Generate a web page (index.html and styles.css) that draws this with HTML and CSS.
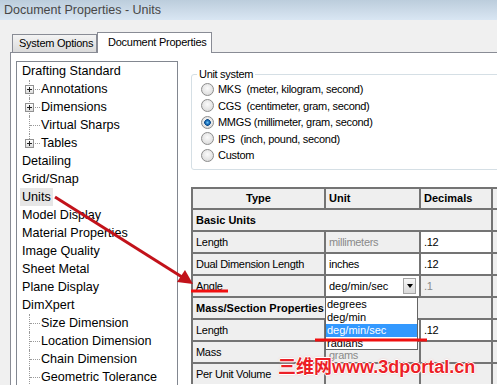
FILE: index.html
```html
<!DOCTYPE html>
<html lang="en">
  <head>
    <meta charset="UTF-8" />
    <title>Document Properties - Units</title>
    <link rel="stylesheet" href="styles.css">
  </head>
  <body>
    <div class="titlebar">Document Properties - Units</div>

    <div class="tabs">
      <div class="tab">System Options</div>
      <div class="tab active">Document Properties</div>
    </div>

    <div class="panel">
      <ul class="tree">
        <li>Drafting Standard</li>
        <li class="child"><span class="branch"><span class="plus"></span></span>Annotations</li>
        <li class="child"><span class="branch"><span class="plus"></span></span>Dimensions</li>
        <li class="child"><span class="branch"></span>Virtual Sharps</li>
        <li class="child last"><span class="branch"><span class="plus"></span></span>Tables</li>
        <li>Detailing</li>
        <li>Grid/Snap</li>
        <li><span class="selected">Units</span></li>
        <li>Model Display</li>
        <li>Material Properties</li>
        <li>Image Quality</li>
        <li>Sheet Metal</li>
        <li>Plane Display</li>
        <li>DimXpert</li>
        <li class="child"><span class="branch"></span>Size Dimension</li>
        <li class="child"><span class="branch"></span>Location Dimension</li>
        <li class="child"><span class="branch"></span>Chain Dimension</li>
        <li class="child"><span class="branch"></span>Geometric Tolerance</li>
      </ul>

      <div class="content">
        <fieldset class="unit-system">
          <legend>Unit system</legend>
          <div class="radio-row"><span class="radio"></span>MKS  (meter, kilogram, second)</div>
          <div class="radio-row"><span class="radio"></span>CGS  (centimeter, gram, second)</div>
          <div class="radio-row"><span class="radio checked"></span>MMGS (millimeter, gram, second)</div>
          <div class="radio-row"><span class="radio"></span>IPS  (inch, pound, second)</div>
          <div class="radio-row"><span class="radio"></span>Custom</div>
        </fieldset>

        <div class="units">
          <div class="cell head center">Type</div>
          <div class="cell head">Unit</div>
          <div class="cell head">Decimals</div>
          <div class="cell"></div>

          <div class="cell span">Basic Units</div>
          <div class="cell"></div>

          <div class="cell">Length</div>
          <div class="cell muted">millimeters</div>
          <div class="cell white">.12</div>
          <div class="cell"></div>

          <div class="cell">Dual Dimension Length</div>
          <div class="cell white">inches</div>
          <div class="cell white">.12</div>
          <div class="cell"></div>

          <div class="cell">Angle</div>
          <div class="cell white combo">deg/min/sec<span class="combo-btn"></span></div>
          <div class="cell muted">.1</div>
          <div class="cell"></div>

          <div class="cell span">Mass/Section Properties</div>
          <div class="cell"></div>

          <div class="cell">Length</div>
          <div class="cell white"></div>
          <div class="cell white">.12</div>
          <div class="cell"></div>

          <div class="cell">Mass</div>
          <div class="cell muted low">grams</div>
          <div class="cell"></div>
          <div class="cell"></div>

          <div class="cell">Per Unit Volume</div>
          <div class="cell"></div>
          <div class="cell"></div>
          <div class="cell"></div>

          <ul class="dropdown">
            <li>degrees</li>
            <li>deg/min</li>
            <li class="active">deg/min/sec</li>
            <li>radians</li>
          </ul>
        </div>
      </div>
    </div>

    <svg class="marks" width="497" height="385" viewBox="0 0 497 385">
      <line x1="55" y1="197" x2="182" y2="277" stroke="#c2121a" stroke-width="3" />
      <polygon points="193,284 177,282 185,270" fill="#c2121a" />
      <line x1="191" y1="291" x2="228" y2="291" stroke="#f01010" stroke-width="3" />
      <line x1="315" y1="340" x2="427" y2="340" stroke="#f01010" stroke-width="3" />
    </svg>

    <div class="watermark">三维网www.3dportal.cn</div>
  </body>
</html>
```

FILE: styles.css
```css
body {
  margin: 0;
  width: 497px;
  height: 385px;
  overflow: hidden;
  position: relative;
  background: #f0f0f0;
  font-family: "Liberation Sans", Arial, sans-serif;
  color: #000;
}
.titlebar {
  height: 20px;
  line-height: 21px;
  padding-left: 4px;
  font-size: 12.5px;
  color: #474747;
  background: linear-gradient(#bccddc, #d9e6f3);
}
.tabs {
  display: flex;
  align-items: flex-end;
  height: 32px;
  padding-left: 12px;
  box-sizing: border-box;
  font-size: 11px;
  letter-spacing: -0.25px;
}
.tab {
  box-sizing: border-box;
  width: 85px;
  height: 18px;
  line-height: 17px;
  padding-left: 6px;
  white-space: nowrap;
  overflow: hidden;
  border: 1px solid #898c95;
  border-bottom: none;
  background: linear-gradient(#f4f4f4, #dadada);
}
.tab.active {
  width: 115px;
  height: 21px;
  line-height: 18px;
  padding-left: 10px;
  margin-bottom: -1px;
  position: relative;
  z-index: 1;
  background: #fff;
}
.panel {
  margin-left: 10px;
  height: 332px;
  display: flex;
  align-items: flex-start;
  overflow: hidden;
  background: #fff;
  border-top: 1px solid #898c95;
  border-left: 1px solid #898c95;
}

/* tree */
.tree {
  list-style: none;
  margin: 8px 0 0 5px;
  padding: 0;
  width: 162px;
  height: 340px;
  flex: none;
  box-sizing: border-box;
  border: 1px solid #828790;
  font-size: 12.6px;
}
.tree li {
  display: flex;
  align-items: center;
  height: 18px;
  padding-left: 5px;
  white-space: nowrap;
}
.tree .selected {
  background: #e6e6e6;
  line-height: 18px;
  padding: 0 2px;
  margin-left: -2px;
}
.branch {
  position: relative;
  width: 19px;
  height: 18px;
  flex: none;
}
.branch::before {
  content: "";
  position: absolute;
  left: 7px;
  top: 0;
  bottom: 0;
  border-left: 1px dotted #9a9a9a;
}
.last .branch::before {
  bottom: 9px;
}
.branch::after {
  content: "";
  position: absolute;
  left: 8px;
  top: 9px;
  width: 10px;
  border-top: 1px dotted #9a9a9a;
}
.plus {
  position: absolute;
  left: 3px;
  top: 5px;
  width: 9px;
  height: 9px;
  box-sizing: border-box;
  z-index: 1;
  border: 1px solid #919191;
  background:
    linear-gradient(#222, #222) center / 5px 1px no-repeat,
    linear-gradient(#222, #222) center / 1px 5px no-repeat,
    linear-gradient(#fff, #dcdcdc);
}

/* right side */
.content {
  margin: 15px 0 0 13px;
  width: 340px;
  flex: none;
  font-size: 11px;
  letter-spacing: -0.3px;
}
.unit-system {
  margin: 0;
  padding: 0 0 5px 9px;
  width: 330px;
  border: 1px solid #d5dfe5;
  border-radius: 3px;
}
.unit-system legend {
  padding: 0 2px;
  margin-left: -4px;
  line-height: 13px;
}
.radio-row {
  display: flex;
  align-items: center;
  height: 16.5px;
  white-space: pre;
}
.radio {
  width: 13px;
  height: 13px;
  margin-right: 4px;
  flex: none;
  box-sizing: border-box;
  border-radius: 50%;
  border: 1px solid #8c8c8c;
  background: radial-gradient(circle at 50% 40%, #fbfbfb, #d4d4d4);
}
.radio.checked {
  background:
    radial-gradient(circle, #6cc4f4 0, #1a6cb8 2px, #0c4a88 3px, rgba(0, 0, 0, 0) 3.6px),
    radial-gradient(circle at 50% 40%, #fbfbfb, #d4d4d4);
}

.units {
  position: relative;
  margin-top: 17px;
  display: grid;
  grid-template-columns: 131px 93px 70px 40px;
  grid-template-rows: 19px;
  grid-auto-rows: 20px;
  gap: 2px;
  padding: 2px 0 0 2px;
  background: #747474;
}
.cell {
  display: flex;
  align-items: center;
  padding-left: 3px;
  white-space: nowrap;
  overflow: hidden;
  background: #efefef;
}
.cell.white {
  background: #fff;
}
.cell.head {
  font-weight: bold;
  letter-spacing: 0;
}
.cell.center {
  justify-content: center;
  padding-left: 0;
}
.cell.span {
  grid-column: span 3;
  font-weight: bold;
  letter-spacing: 0;
}
.cell.muted {
  color: #8a8a8a;
}
.cell.low {
  align-items: flex-end;
  line-height: 13px;
}
.combo {
  justify-content: space-between;
  letter-spacing: 0;
}
.combo-btn {
  width: 13px;
  height: 16px;
  margin-right: 3px;
  box-sizing: border-box;
  border: 1px solid #a5a5a5;
  background: linear-gradient(#f7f7f7, #dadada);
  display: flex;
  align-items: center;
  justify-content: center;
}
.combo-btn::after {
  content: "";
  border-left: 3.5px solid transparent;
  border-right: 3.5px solid transparent;
  border-top: 4px solid #000;
  margin-top: 1px;
}
.dropdown {
  position: absolute;
  left: 134px;
  top: 110px;
  width: 93px;
  height: 53px;
  box-sizing: border-box;
  margin: 0;
  padding: 0;
  list-style: none;
  overflow: hidden;
  background: #fff;
  border: 1px solid #646464;
  letter-spacing: 0;
}
.dropdown li {
  height: 13px;
  line-height: 13px;
  padding-left: 1px;
}
.dropdown li.active {
  background: #3399ff;
  color: #fff;
}

/* overlays */
.marks {
  position: absolute;
  left: 0;
  top: 0;
  pointer-events: none;
}
.watermark {
  position: absolute;
  left: 278px;
  top: 356px;
  font-family: "Liberation Sans", "Noto Sans CJK SC", sans-serif;
  font-size: 18px;
  font-weight: bold;
  line-height: 22px;
  white-space: nowrap;
  color: #ec1f27;
  text-shadow: 1px 0 0 #fff, -1px 0 0 #fff, 0 1px 0 #fff, 0 -1px 0 #fff, 0 0 3px #f7a0a0;
}
```
